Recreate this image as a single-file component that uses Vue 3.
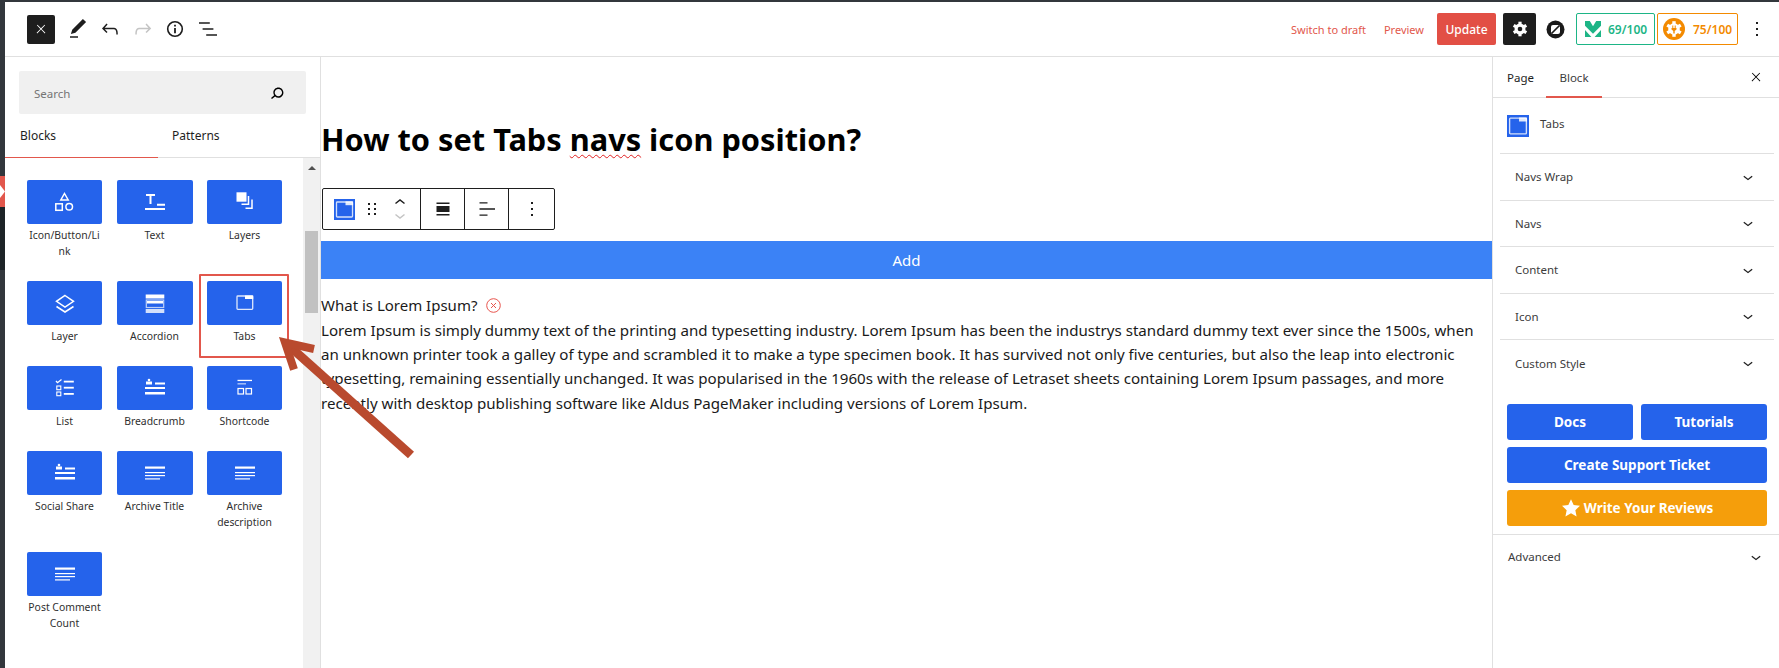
<template>
  <div class="page">
    <div class="wp-strip">
      <div class="strip-a"></div>
      <div class="strip-red">
        <svg width="5" height="31" viewBox="0 0 5 31"><path d="M0 9l5 6.500-5 6.500z" fill="#fff" /></svg>
      </div>
      <div class="strip-b"></div>
      <div class="strip-c"></div>
    </div>

    <div class="editor">
      <header class="topbar">
        <button class="close-btn">
          <svg width="14" height="14" viewBox="0 0 24 24" fill="#fff"><path :d="paths.close" /></svg>
        </button>
        <div class="tools">
          <svg width="24" height="24" viewBox="0 0 24 24"><path :d="paths.pen" /></svg>
          <svg width="24" height="24" viewBox="0 0 24 24"><path :d="paths.undo" /></svg>
          <svg width="24" height="24" viewBox="0 0 24 24" fill="#c4c4c4"><path :d="paths.redo" /></svg>
          <svg width="24" height="24" viewBox="0 0 24 24"><circle cx="12" cy="12" r="7.300" fill="none" stroke="#1e1e1e" stroke-width="1.600" /><path d="M11.100 11h1.800v5.200h-1.800zM11.100 7.800h1.800v1.800h-1.800z" /></svg>
          <svg width="24" height="24" viewBox="0 0 24 24"><path :d="paths.listview" /></svg>
        </div>
        <div class="spacer"></div>
        <a class="link switch">Switch to draft</a>
        <a class="link preview">Preview</a>
        <button class="update">Update</button>
        <button class="gear">
          <svg width="16" height="16" viewBox="0 0 16 16">
            <g fill="#fff">
              <circle cx="8" cy="8" r="5.500" />
              <rect v-for="a in gearTeeth" :key="a" x="6.400" y="0.700" width="3.200" height="14.600" :transform="`rotate(${a} 8 8)`" />
            </g>
            <circle cx="8" cy="8" r="2.300" fill="#1e1e1e" />
          </svg>
        </button>
        <svg class="zlogo" width="19" height="19" viewBox="0 0 19 19">
          <circle cx="9.500" cy="9.500" r="9" fill="#1a1a1a" />
          <rect x="5" y="5" width="9" height="9" rx="2" fill="#fff" />
          <path d="M5.500 13.500L13.500 5.500" stroke="#1a1a1a" stroke-width="1.700" />
        </svg>
        <div class="badge green">
          <svg width="16" height="16" viewBox="0 0 15 15" fill="#1db586">
            <path d="M0 0h4.500l3 5 3-5H15v4.500l-7.500 7.500L0 4.500z" />
            <path d="M0 8.500L6 15H0zM15 8.500V15H9z" />
          </svg>
          <span>69/100</span>
        </div>
        <div class="badge orange">
          <svg width="22" height="22" viewBox="0 0 22 22">
            <circle cx="11" cy="11" r="11" fill="#f38a00" />
            <g fill="#fff">
              <circle cx="11" cy="11" r="5.800" />
              <rect v-for="a in gearTeeth" :key="a" x="9.300" y="3.200" width="3.400" height="15.600" :transform="`rotate(${a} 11 11)`" />
            </g>
            <path d="M9.300 7.500h1v2.500h1.400V7.500h1v2.500h.8v1.500L11.700 13v2.500h-1.400V13l-1.800-1.500V10h.8z" fill="#f38a00" />
          </svg>
          <span>75/100</span>
        </div>
        <svg class="more-top" width="24" height="24" viewBox="0 0 24 24"><path :d="paths.more" /></svg>
      </header>

      <div class="body">
        <aside class="inserter">
          <div class="search-box">
            <span class="search-text">Search</span>
            <svg width="22" height="22" viewBox="0 0 24 24"><path :d="paths.search" /></svg>
          </div>
          <div class="ins-tabs">
            <div class="ins-tab active">Blocks</div>
            <div class="ins-tab">Patterns</div>
          </div>
          <div class="ins-scroll">
            <div class="block-grid">
              <div v-for="b in blocks" :key="b.name" class="block-item">
                <div class="block-btn">
                  <svg width="24" height="24" viewBox="0 0 24 24" v-html="icons[b.icon]"></svg>
                </div>
                <div class="block-label">{{ b.name }}</div>
              </div>
            </div>
            <div class="scrollbar">
              <div class="scroll-up"></div>
              <div class="scroll-thumb"></div>
            </div>
          </div>
        </aside>

        <main class="canvas">
          <h1 class="post-title">How to set Tabs <span class="typo">navs</span> icon position?</h1>
          <div class="block-toolbar">
            <div class="tb-group first">
              <span class="tb-type">
                <svg width="21" height="21" viewBox="0 0 21 21"><rect x="2.500" y="3" width="16" height="15" rx=".8" fill="none" stroke="#fff" stroke-opacity=".8" stroke-width="1.300" /><rect x="11.500" y="2.400" width="7.600" height="3.800" fill="#fff" fill-opacity=".85" /></svg>
              </span>
              <svg class="drag" width="10" height="14" viewBox="0 0 10 14" fill="#1e1e1e"><path d="M1 1h2v2H1zM7 1h2v2H7zM1 6h2v2H1zM7 6h2v2H7zM1 11h2v2H1zM7 11h2v2H7z" /></svg>
              <svg class="movers" width="12" height="24" viewBox="0 0 12 24" fill="none" stroke-width="1.500">
                <path d="M1.500 6.500L6 3l4.500 3.500" stroke="#1e1e1e" />
                <path d="M1.500 17.500L6 21l4.500-3.500" stroke="#c4c4c4" />
              </svg>
            </div>
            <div class="tb-group">
              <svg width="24" height="24" viewBox="0 0 24 24"><path d="M5.500 5.500h13v1.400h-13zM5.500 9h13v6h-13zM5.500 17.100h13v1.400h-13z" /></svg>
            </div>
            <div class="tb-group">
              <svg width="24" height="24" viewBox="0 0 24 24"><path d="M4.500 5.200h8v1.400h-8zM4.500 11.300h15.500v1.400H4.500zM4.500 17.400h8v1.400h-8z" /></svg>
            </div>
            <div class="tb-group last">
              <svg width="24" height="24" viewBox="0 0 24 24"><path :d="paths.more" /></svg>
            </div>
          </div>
          <div class="add-bar">Add</div>
          <div class="tab-title">
            <span>What is Lorem Ipsum?</span>
            <svg width="15" height="15" viewBox="0 0 15 15" fill="none" stroke="#e8554e" stroke-width="1"><circle cx="7.500" cy="7.500" r="6.800" /><path d="M5 5l5 5M10 5l-5 5" /></svg>
          </div>
          <p class="tab-body">Lorem Ipsum is simply dummy text of the printing and typesetting industry. Lorem Ipsum has been the industrys standard dummy text ever since the 1500s, when an unknown printer took a galley of type and scrambled it to make a type specimen book. It has survived not only five centuries, but also the leap into electronic typesetting, remaining essentially unchanged. It was popularised in the 1960s with the release of Letraset sheets containing Lorem Ipsum passages, and more recently with desktop publishing software like Aldus PageMaker including versions of Lorem Ipsum.</p>
        </main>

        <aside class="settings">
          <div class="set-tabs">
            <div class="set-tab">Page</div>
            <div class="set-tab active">Block</div>
            <div class="spacer"></div>
            <svg width="14" height="14" viewBox="0 0 24 24"><path :d="paths.close" /></svg>
          </div>
          <div class="block-card">
            <span class="card-icon">
              <svg width="22" height="22" viewBox="0 0 21 21"><rect x="2.500" y="3" width="16" height="15" rx=".8" fill="none" stroke="#fff" stroke-opacity=".8" stroke-width="1.300" /><rect x="11.500" y="2.400" width="7.600" height="3.800" fill="#fff" fill-opacity=".85" /></svg>
            </span>
            <span class="card-name">Tabs</span>
          </div>
          <div class="panels">
            <div v-for="p in panels" :key="p" class="panel-row">
              <span>{{ p }}</span>
              <svg width="20" height="20" viewBox="0 0 24 24"><path :d="paths.down" /></svg>
            </div>
          </div>
          <div class="actions">
            <div class="action-pair">
              <button class="action">Docs</button>
              <button class="action">Tutorials</button>
            </div>
            <button class="action">Create Support Ticket</button>
            <button class="action amber">
              <svg width="20" height="20" viewBox="0 0 24 24" fill="#fff"><path d="M12 1.500l3.200 7 7.600.9-5.600 5.200 1.500 7.500L12 18.300l-6.700 3.800 1.500-7.500L1.200 9.400l7.600-.9z" /></svg>
              Write Your Reviews
            </button>
          </div>
          <div class="advanced">
            <span>Advanced</span>
            <svg width="20" height="20" viewBox="0 0 24 24"><path :d="paths.down" /></svg>
          </div>
        </aside>
      </div>
    </div>

    <!-- annotation drawn on top of the screenshot -->
    <div class="mark-box"></div>
    <svg class="mark-arrow" width="150" height="130" viewBox="0 0 150 130" fill="none" stroke="#b94a2e">
      <path d="M141 125L17 14" stroke-width="9" />
      <path d="M44 19L15 12.500l9 27" stroke-width="8" />
    </svg>
  </div>
</template>

<script setup>
const paths = {
  close: "M13 11.800l6.100-6.300-1-1-6.100 6.200-6.100-6.200-1 1 6.100 6.300-6.500 6.700 1 1 6.500-6.600 6.500 6.600 1-1z",
  pen: "M20.100 5.100L16.900 2 6.200 12.700l-1.300 4.400 4.500-1.300L20.100 5.100zM4 20.800h8v-1.500H4v1.500z",
  undo: "M18.300 11.700c-.6-.6-1.400-.9-2.300-.9H6.700l2.900-3.300-1.100-1-4.500 5L8.500 16l1-1-2.700-2.700H16c.5 0 .9.2 1.300.5 1 1 1 3.400 1 4.500v.3h1.500v-.2c0-1.500 0-4.300-1.500-5.700z",
  redo: "M15.600 6.500l-1.100 1 2.900 3.300H8c-.9 0-1.700.3-2.300.9-1.400 1.500-1.400 4.200-1.400 5.600v.2h1.500v-.3c0-1.100 0-3.500 1-4.500.3-.3.7-.5 1.300-.5h9.200L14.500 15l1.100 1.100 4.600-4.600-4.600-5z",
  listview: "M13.800 5.200H3v1.500h10.800V5.200zm-3.600 12v1.500H21v-1.500H10.200zm7.200-6H6.600v1.500h10.800v-1.500z",
  search: "M13.500 6C10.500 6 8 8.500 8 11.500c0 1.100.3 2.100.9 3l-3.400 3 1 1.100 3.400-2.900c1 .9 2.200 1.400 3.600 1.400 3 0 5.500-2.500 5.500-5.500C19 8.500 16.500 6 13.500 6zm0 9.500c-2.200 0-4-1.800-4-4s1.800-4 4-4 4 1.800 4 4-1.800 4-4 4z",
  more: "M13 19h-2v-2h2v2zm0-6h-2v-2h2v2zm0-6h-2V5h2v2z",
  down: "M17.500 11.600L12 16l-5.500-4.400.9-1.200L12 14l4.500-3.600 1 1.200z",
};

const gearTeeth = [0, 60, 120];

const archive = '<rect x="2" y="5.500" width="20" height="2.200" fill="#fff"/><rect x="2" y="11" width="20" height="1.200" fill="#fff"/><rect x="2" y="14" width="20" height="1.200" fill="#fff"/><rect x="2" y="17.300" width="15" height="1.200" fill="#fff"/>';
const person = '<circle cx="6" cy="4" r="1.300" fill="#fff"/><rect x="3" y="5.500" width="6" height="3" fill="#fff"/><rect x="12" y="6.500" width="10" height="2" fill="#fff"/><rect x="2" y="11" width="20" height="2" fill="#fff"/><rect x="2" y="16" width="20" height="2.500" fill="#fff"/>';

const icons = {
  shapes: '<path d="M11.500 3.500l3.700 6.500H7.800z" fill="none" stroke="#fff" stroke-width="1.500"/><rect x="2.800" y="13.800" width="6.500" height="6.500" fill="none" stroke="#fff" stroke-width="1.500"/><circle cx="16.200" cy="16.800" r="3.300" fill="none" stroke="#fff" stroke-width="1.500"/>',
  text: '<path d="M3 4h9v2H8.500v8h-2V6H3zM14 13.700h8v2h-8zM2 18h20v2H2z" fill="#fff"/>',
  layers: '<rect x="3.500" y="2.300" width="10" height="9.400" fill="#fff"/><path d="M8.500 14.200h7V6M12.500 18.200h6.500V9.500" fill="none" stroke="#fff" stroke-width="1.500"/>',
  layer: '<path d="M12 4.500l8.500 5.800L12 16l-8.500-5.700z" fill="none" stroke="#fff" stroke-width="1.500"/><path d="M3.500 15.500L12 21l8.500-5.500" fill="none" stroke="#fff" stroke-width="1.500"/>',
  accordion: '<rect x="2.700" y="3.500" width="18.600" height="4" fill="#fff"/><rect x="3.300" y="9" width="17.400" height="7.500" fill="none" stroke="#fff" stroke-opacity=".7" stroke-width="1.200"/><rect x="4" y="10" width="16" height="2.500" fill="#fff"/><rect x="2.700" y="18" width="18.600" height="4" fill="#fff" fill-opacity=".8"/>',
  tabs: '<rect x="4" y="5" width="15.700" height="13.400" rx=".8" fill="none" stroke="#fff" stroke-opacity=".85" stroke-width="1.300"/><rect x="12" y="4.500" width="8.200" height="3.500" fill="#fff"/>',
  list: '<path d="M3 5l1.500 1.700L8.500 3.500" fill="none" stroke="#fff" stroke-width="1.300"/><rect x="3.800" y="10" width="4" height="3.700" fill="none" stroke="#fff" stroke-width="1.100"/><rect x="3.800" y="16" width="4" height="3.700" fill="none" stroke="#fff" stroke-width="1.100"/><rect x="10.800" y="4.700" width="10" height="1.800" fill="#fff"/><rect x="10.800" y="10.800" width="10" height="1.800" fill="#fff"/><rect x="10.800" y="17" width="10" height="1.800" fill="#fff"/>',
  person,
  shortcode: '<rect x="4.500" y="3.800" width="14.500" height="1.300" fill="#fff"/><rect x="4.500" y="7.300" width="8.500" height="1.100" fill="#fff" fill-opacity=".8"/><rect x="5" y="12.500" width="5.500" height="5.500" fill="none" stroke="#fff" stroke-width="1.200"/><rect x="13" y="12.500" width="5.500" height="5.500" fill="none" stroke="#fff" stroke-width="1.200"/>',
  archive,
};

const blocks = [
  { name: "Icon/Button/Link", icon: "shapes" },
  { name: "Text", icon: "text" },
  { name: "Layers", icon: "layers" },
  { name: "Layer", icon: "layer" },
  { name: "Accordion", icon: "accordion" },
  { name: "Tabs", icon: "tabs" },
  { name: "List", icon: "list" },
  { name: "Breadcrumb", icon: "person" },
  { name: "Shortcode", icon: "shortcode" },
  { name: "Social Share", icon: "person" },
  { name: "Archive Title", icon: "archive" },
  { name: "Archive description", icon: "archive" },
  { name: "Post Comment Count", icon: "archive" },
];

const panels = ["Navs Wrap", "Navs", "Content", "Icon", "Custom Style"];
</script>

<style>
html, body {
  margin: 0;
  background: #fff;
}
</style>

<style scoped>
* {
  box-sizing: border-box;
}

.page {
  position: relative;
  display: flex;
  width: 1779px;
  height: 668px;
  overflow: hidden;
  font-family: "Noto Sans", sans-serif;
  color: #1e1e1e;
  border-top: 2px solid #32373c;
}

.wp-strip {
  width: 5px;
  display: flex;
  flex-direction: column;
  flex-shrink: 0;
}
.strip-a { height: 174px; background: #32373c; }
.strip-red { height: 31px; background: #e2574c; line-height: 0; }
.strip-b { height: 63px; background: #1d2327; }
.strip-c { flex: 1; background: #32373c; }

.editor {
  flex: 1;
  display: flex;
  flex-direction: column;
  min-width: 0;
}

.spacer { flex: 1; }

.topbar {
  height: 55px;
  display: flex;
  align-items: center;
  padding-right: 10px;
  border-bottom: 1px solid #e0e0e0;
  flex-shrink: 0;
}

.close-btn {
  width: 28px;
  height: 29px;
  margin-left: 22px;
  background: #1e1e1e;
  border: 0;
  border-radius: 2px;
  padding: 0;
  display: flex;
  align-items: center;
  justify-content: center;
}

.tools {
  display: flex;
  gap: 8.400px;
  margin-left: 11px;
  fill: #1e1e1e;
}

.link {
  font-size: 11px;
  color: #e2574c;
}
.switch { margin-right: 18px; }
.preview { margin-right: 13px; }

.update {
  width: 59px;
  height: 32px;
  background: #e24f45;
  color: #fff;
  border: 0;
  border-radius: 2px;
  font: 500 12px "Noto Sans", sans-serif;
}

.gear {
  width: 33px;
  height: 32px;
  margin-left: 7px;
  background: #1e1e1e;
  border: 0;
  border-radius: 2px;
  padding: 0;
  display: flex;
  align-items: center;
  justify-content: center;
}

.zlogo { margin-left: 10px; }

.badge {
  height: 32px;
  display: flex;
  align-items: center;
  border: 1px solid;
  border-radius: 2px;
  font-size: 12px;
  font-weight: 600;
}
.badge.green {
  width: 79px;
  margin-left: 11px;
  border-color: #1db586;
  color: #1db586;
  padding-left: 8px;
  gap: 7px;
}
.badge.orange {
  width: 81px;
  margin-left: 2px;
  border-color: #f38a00;
  color: #f38a00;
  padding-left: 5px;
  gap: 8px;
}
.more-top {
  margin-left: 7px;
  fill: #1e1e1e;
}

.body {
  flex: 1;
  display: flex;
  min-height: 0;
}

.inserter {
  width: 316px;
  flex-shrink: 0;
  border-right: 1px solid #e0e0e0;
  display: flex;
  flex-direction: column;
}

.search-box {
  height: 43px;
  margin: 14px 14px 0 14px;
  background: #f0f0f0;
  border-radius: 2px;
  display: flex;
  align-items: center;
  justify-content: space-between;
  padding: 1px 18px 0 15px;
}
.search-text {
  font-size: 11.500px;
  color: #757575;
}

.ins-tabs {
  display: flex;
  height: 44px;
  border-bottom: 1px solid #e0e0e0;
  flex-shrink: 0;
}
.ins-tab {
  width: 153px;
  padding: 13px 0 0 15px;
  font-size: 12px;
  margin-bottom: -1px;
}
.ins-tab + .ins-tab {
  padding-left: 14px;
}
.ins-tab.active {
  border-bottom: 1px solid #e2574c;
}

.ins-scroll {
  flex: 1;
  display: flex;
  min-height: 0;
}

.block-grid {
  flex: 1;
  display: grid;
  grid-template-columns: 75px 76px 75px;
  column-gap: 14.500px;
  row-gap: 22px;
  align-content: start;
  padding: 22px 0 0 22px;
}

.block-btn {
  height: 44px;
  background: #2563eb;
  border-radius: 2px;
  display: flex;
  align-items: center;
  justify-content: center;
}

.block-label {
  margin-top: 3px;
  font-size: 10.400px;
  line-height: 16px;
  text-align: center;
  color: #2f2f2f;
  word-break: break-word;
}

.scrollbar {
  width: 17px;
  background: #f1f1f1;
  display: flex;
  flex-direction: column;
  align-items: center;
}
.scroll-up {
  margin-top: 8px;
  width: 0;
  height: 0;
  border-left: 4px solid transparent;
  border-right: 4px solid transparent;
  border-bottom: 4px solid #505050;
}
.scroll-thumb {
  width: 13px;
  height: 82px;
  margin-top: 61px;
  background: #c1c1c1;
}

.canvas {
  width: 1171px;
  flex-shrink: 0;
  min-width: 0;
}

.post-title {
  margin: 60px 0 0 0;
  font-size: 30.750px;
  line-height: 44px;
  font-weight: 700;
  color: #000;
}
.typo {
  text-decoration: underline wavy #e02020 1px;
  text-underline-offset: 3px;
}

.block-toolbar {
  display: inline-flex;
  height: 42px;
  margin: 27px 0 0 1px;
  border: 1px solid #1e1e1e;
  border-radius: 2px;
  vertical-align: top;
}
.tb-group {
  width: 44px;
  display: flex;
  align-items: center;
  justify-content: center;
  border-right: 1px solid #1e1e1e;
  fill: #1e1e1e;
}
.tb-group.first {
  width: 98px;
  justify-content: flex-start;
  padding-left: 11px;
}
.tb-group.last {
  width: 45px;
  border-right: 0;
}
.tb-type {
  width: 21px;
  height: 21px;
  background: #2563eb;
  display: flex;
}
.drag { margin-left: 12px; }
.movers { margin-left: 17px; }

.add-bar {
  height: 38px;
  margin-top: 11px;
  background: #3b82f6;
  color: #fff;
  font-size: 15px;
  line-height: 38px;
  text-align: center;
}

.tab-title {
  display: flex;
  align-items: center;
  gap: 9px;
  height: 24px;
  margin: 14px 0 1px 0;
  font-size: 15px;
  color: #1a1a1a;
}

.tab-body {
  margin: 0;
  width: 1160px;
  font-size: 15.120px;
  line-height: 24.200px;
  color: #1a1a1a;
}

.settings {
  flex: 1;
  min-width: 0;
  border-left: 1px solid #e0e0e0;
  display: flex;
  flex-direction: column;
}

.set-tabs {
  height: 41px;
  display: flex;
  align-items: center;
  border-bottom: 1px solid #e0e0e0;
  padding: 0 16px 0 14px;
  flex-shrink: 0;
}
.set-tab {
  font-size: 11.500px;
  height: 41px;
  line-height: 42px;
  width: 27px;
  margin-right: 12px;
  margin-bottom: -1px;
}
.set-tab.active {
  width: 56px;
  text-align: center;
  border-bottom: 2px solid #e2574c;
  color: #3c3c3c;
}

.block-card {
  height: 55px;
  display: flex;
  align-items: flex-start;
  padding: 17px 0 0 14px;
  flex-shrink: 0;
}
.card-icon {
  width: 22px;
  height: 22px;
  background: #2563eb;
  display: flex;
}
.card-name {
  margin-left: 11px;
  font-size: 11.500px;
  line-height: 18px;
  color: #3c3c3c;
}

.panels {
  margin: 0 5px 0 7px;
  border-top: 1px solid #e0e0e0;
  flex-shrink: 0;
}
.panel-row {
  height: 46.500px;
  display: flex;
  align-items: center;
  justify-content: space-between;
  padding: 0 16px 0 15px;
  border-bottom: 1px solid #e0e0e0;
  font-size: 11.500px;
  color: #3c3c3c;
  fill: #1e1e1e;
}
.panel-row:last-child {
  border-bottom: 0;
}

.actions {
  display: flex;
  flex-direction: column;
  gap: 7px;
  padding: 17.500px 12px 0 14px;
  flex-shrink: 0;
}
.action-pair {
  display: flex;
  gap: 8px;
}
.action-pair .action {
  flex: 1;
}
.action {
  height: 36px;
  background: #2563eb;
  color: #fff;
  border: 0;
  border-radius: 3px;
  font: 700 13.500px "Noto Sans", sans-serif;
  display: flex;
  align-items: center;
  justify-content: center;
  gap: 3px;
}
.action.amber {
  background: #f59e0b;
}

.advanced {
  height: 44px;
  margin-top: 8px;
  display: flex;
  align-items: center;
  justify-content: space-between;
  padding: 0 13px 0 15px;
  border-top: 1px solid #e0e0e0;
  font-size: 11.500px;
  color: #3c3c3c;
  fill: #1e1e1e;
}

.mark-box {
  position: absolute;
  left: 199px;
  top: 272px;
  width: 90px;
  height: 84px;
  border: 2px solid #e2574c;
  border-radius: 1px;
}

.mark-arrow {
  position: absolute;
  left: 270px;
  top: 328px;
}
</style>
